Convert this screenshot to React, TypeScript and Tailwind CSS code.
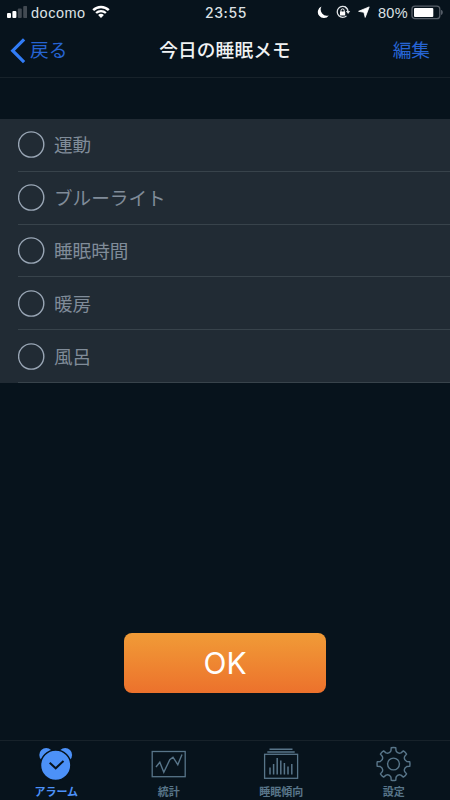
import React from "react";

const items = ["運動", "ブルーライト", "睡眠時間", "暖房", "風呂"];

function gearPath(cx: number, cy: number) {
  const pt = (r: number, deg: number) => {
    const a = ((deg - 90) * Math.PI) / 180;
    return `${(cx + r * Math.cos(a)).toFixed(2)} ${(cy + r * Math.sin(a)).toFixed(2)}`;
  };
  let d = `M${pt(16.4, -8)}`;
  for (let i = 0; i < 8; i++) {
    const c = i * 45;
    d += ` Q${pt(16.7, c)} ${pt(16.4, c + 8)} L${pt(13.4, c + 11)} Q${pt(10.8, c + 22.5)} ${pt(13.4, c + 34)} L${pt(16.4, c + 37)}`;
  }
  return d + "Z";
}

function StatusBar() {
  return (
    <div className="flex h-6 items-center text-[#dde1e4]">
      <svg className="ml-[7px] block" width="20" height="24" viewBox="0 0 20 24">
        <rect x="0" y="13" width="4" height="5" rx="1" fill="#fff" />
        <rect x="5.4" y="11" width="4" height="7" rx="1" fill="#fff" />
        <rect x="10.8" y="8.5" width="4" height="9.5" rx="1" fill="#424a52" />
        <rect x="16.2" y="6" width="4" height="12" rx="1" fill="#424a52" />
      </svg>
      <span className="ml-[4px] w-[55px] whitespace-nowrap pt-px text-[14.5px] leading-6 tracking-[0.5px]">docomo</span>
      <svg className="ml-[6px] block" width="18" height="24" viewBox="0 0 18 24" fill="none" stroke="#fff">
        <path d="M1.2 10.1a11.2 11.2 0 0 1 15.6 0" strokeWidth="2.5" />
        <path d="M4.1 13a7.1 7.1 0 0 1 9.8 0" strokeWidth="2.3" />
        <path d="M9 18L6.1 15.1a4.2 4.2 0 0 1 5.8 0Z" fill="#fff" stroke="none" />
      </svg>
      <span className="ml-[95px] w-[42px] whitespace-nowrap pt-px font-['Inter'] text-[14px] font-medium leading-6 tracking-[0.6px]">23:55</span>
      <svg className="ml-[70px] block" width="54" height="24" viewBox="317 0 54 24">
        <path d="M321.5 6.5a6 6 0 1 0 7.3 8.9a6.2 6.2 0 0 1-7.3-8.9Z" fill="#fff" />
        <path d="M346.3 7.7a5.5 5.5 0 1 0 .2 8.2" fill="none" stroke="#e0e4e7" strokeWidth="1.3" />
        <path d="M345 6.9a5.5 5.5 0 0 1 3 4.6" fill="none" stroke="#e0e4e7" strokeWidth="1.3" />
        <path d="M345.9 11.1h4.3l-2.1 2.8Z" fill="#e0e4e7" />
        <rect x="340" y="11.5" width="5.2" height="4" rx=".5" fill="#fff" />
        <path d="M341 12v-1.5a1.6 1.6 0 0 1 3.2 0V12" fill="none" stroke="#fff" strokeWidth="1" />
        <path d="M369.2 6.9L365.2 17.4l-1.3-5.1l-5.3-1Z" fill="#fff" stroke="#fff" strokeWidth=".8" strokeLinejoin="round" />
      </svg>
      <span className="ml-[7px] w-[31px] whitespace-nowrap pt-px text-[14.5px] leading-6 tracking-[0.3px]">80%</span>
      <svg className="ml-[2px] block" width="33" height="24" viewBox="0 0 33 24">
        <rect x="1" y="6.1" width="27.8" height="12.6" rx="3" fill="none" stroke="#59616a" strokeWidth="1.3" />
        <rect x="3" y="8" width="19.3" height="9" rx="1" fill="#fff" />
        <path d="M30.6 10.3q1.6 2.1 0 4.2Z" fill="#59616a" stroke="#59616a" />
      </svg>
    </div>
  );
}

function NavBar() {
  return (
    <header className="grid h-[54px] grid-cols-3 border-b border-[#17222a] text-[18.7px] leading-[54px]">
      <div className="flex items-center text-[#2664d3]">
        <svg className="ml-[9px] block" width="17" height="28" viewBox="0 0 17 28">
          <path d="M15.1 2.3L3.7 13.7L15.1 25.1" fill="none" stroke="#317cf6" strokeWidth="3.2" />
        </svg>
        <span className="ml-[4px]">戻る</span>
      </div>
      <h1 className="whitespace-nowrap text-center font-medium tracking-[0.1px] text-[#f0f2f3]">今日の睡眠メモ</h1>
      <div className="pr-5 text-right text-[#2664d3]">編集</div>
    </header>
  );
}

function Tab({ label, active = false, children }: { label: string; active?: boolean; children: React.ReactNode }) {
  return (
    <div className={`flex flex-col items-center ${active ? "text-[#4c91f8]" : "text-[#587589]"}`}>
      <svg className="mt-[5px] block" width="36" height="36" viewBox="0 0 36 36" fill="none" stroke="currentColor">
        {children}
      </svg>
      <span className="mt-[2px] whitespace-nowrap text-[11px] font-bold leading-[16px]">{label}</span>
    </div>
  );
}

export default function App() {
  return (
    <div className="flex h-[800px] w-[450px] flex-col overflow-hidden bg-[#07131c] font-['Liberation_Sans','Noto_Sans_CJK_JP',sans-serif]">
      <StatusBar />
      <NavBar />
      <ul className="mt-[41px] h-[264px] bg-[#212b34]">
        {items.map((item) => (
          <li key={item} className="ml-[18px] flex h-[52.8px] items-center border-b border-[#38434b]">
            <svg className="block" width="27" height="27" viewBox="0 0 27 27">
              <circle cx="13.2" cy="13.5" r="12.6" fill="none" stroke="#99a6b5" strokeWidth="1.4" />
            </svg>
            <span className="ml-[9px] pt-[2px] text-[18.6px] leading-[27px] text-[#808c99]">{item}</span>
          </li>
        ))}
      </ul>
      <button className="mx-auto mt-[250px] block h-[60px] w-[202px] rounded-[8px] bg-linear-to-b from-[#f09b37] to-[#ec712c] font-['Inter'] text-[30px] leading-[60px] text-white">
        OK
      </button>
      <nav className="mt-auto grid h-[60px] grid-cols-4 border-t border-[#17222a]">
        <Tab label="アラーム" active>
          <circle cx="8.2" cy="8.9" r="6.9" fill="currentColor" stroke="none" />
          <circle cx="27.2" cy="8.9" r="6.9" fill="currentColor" stroke="none" />
          <circle cx="17.7" cy="19.3" r="15.2" fill="currentColor" stroke="#07131c" strokeWidth="1.5" />
          <path d="M11.7 16.8l6 5.5l7.8-7.4" stroke="#07131c" strokeWidth="2" />
        </Tab>
        <Tab label="統計">
          <rect x="1.2" y="5.5" width="33" height="25.2" strokeWidth="1.3" />
          <path d="M5 21l3.8-4.8l4 10l6-12.5l3.2-2.5l4.8 7.5L31 8.5" strokeWidth="1.4" />
        </Tab>
        <Tab label="睡眠傾向">
          <path d="M6.5 3.3h23M4.3 6h27.4" strokeWidth="1.5" />
          <rect x="1.6" y="8.3" width="33" height="24" strokeWidth="1.3" />
          <path d="M7 28.5v-7M10.6 28.5V18M14.2 28.5V12M17.8 28.5V14.5M21.4 28.5V17M25 28.5v-8M28.8 28.5V18" strokeWidth="1.5" />
        </Tab>
        <Tab label="設定">
          <path d={gearPath(17.5, 18)} strokeWidth="1.4" strokeLinejoin="round" />
          <circle cx="17.5" cy="18" r="5.9" strokeWidth="1.4" />
        </Tab>
      </nav>
    </div>
  );
}
